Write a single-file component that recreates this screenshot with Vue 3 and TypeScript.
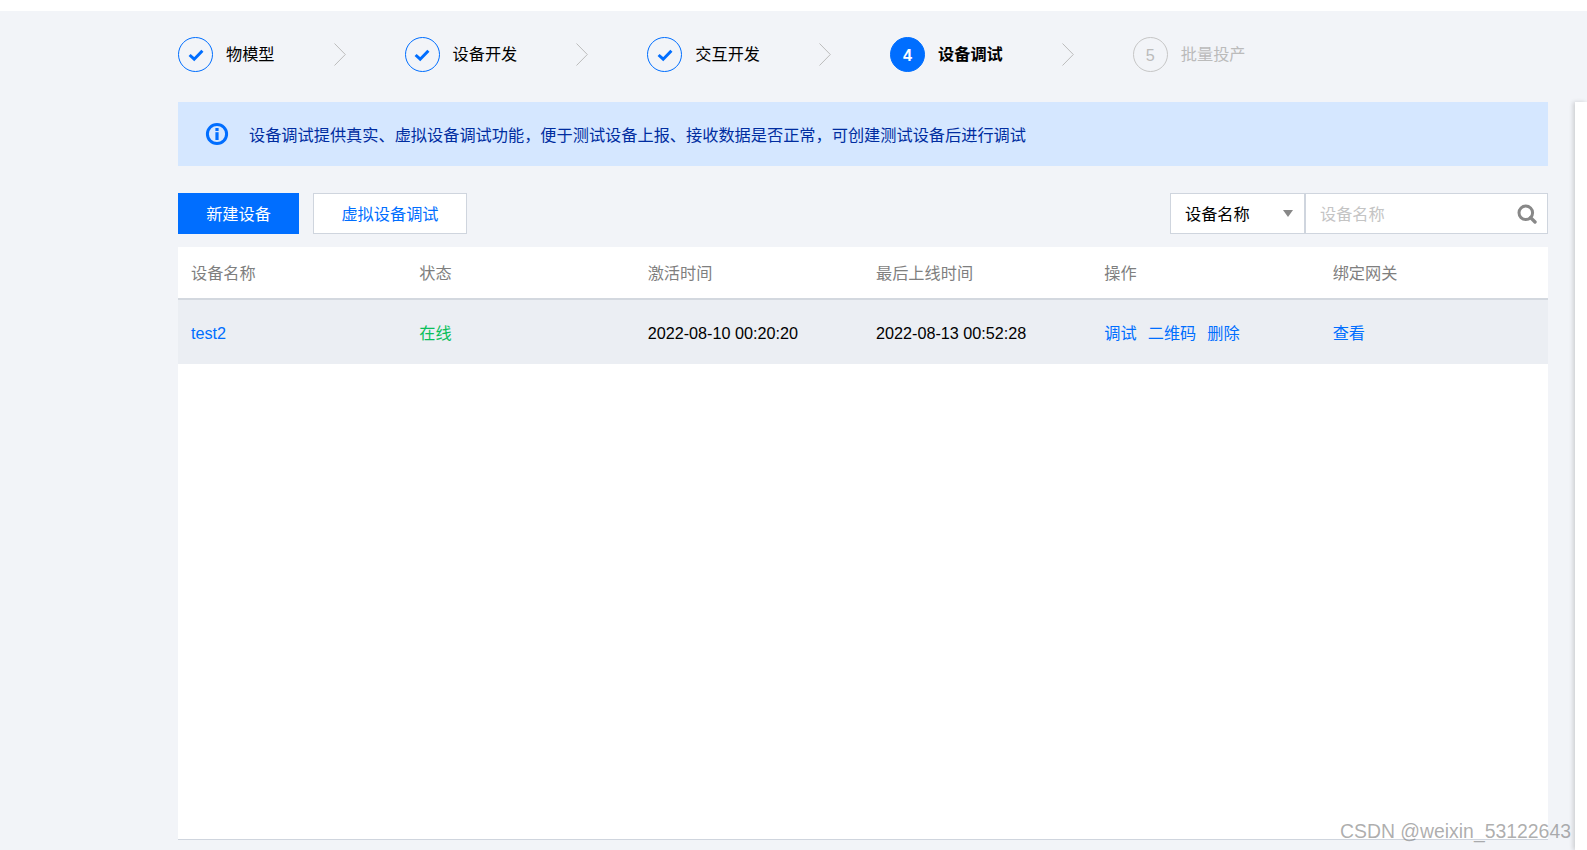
<script setup lang="ts">
interface Step { label: string; state: 'done' | 'active' | 'todo'; num: number }
const steps: Step[] = [
  { label: '物模型', state: 'done', num: 1 },
  { label: '设备开发', state: 'done', num: 2 },
  { label: '交互开发', state: 'done', num: 3 },
  { label: '设备调试', state: 'active', num: 4 },
  { label: '批量投产', state: 'todo', num: 5 },
]
const headers = ['设备名称', '状态', '激活时间', '最后上线时间', '操作', '绑定网关']
</script>

<template>
  <div class="page">
    <div class="topbar"></div>
    <main class="main">
      <nav class="steps">
        <template v-for="(s, i) in steps" :key="s.label">
          <div class="step" :class="s.state">
            <span class="circle">
              <svg v-if="s.state === 'done'" width="16" height="14" viewBox="0 0 16 14">
                <path d="M1.6 7 L6.2 11.2 L14.4 2.8" fill="none" stroke="#006eff" stroke-width="3" />
              </svg>
              <template v-else>{{ s.num }}</template>
            </span>
            <span class="step-label">{{ s.label }}</span>
          </div>
          <svg v-if="i < steps.length - 1" class="chevron" width="12" height="23" viewBox="0 0 12 23">
            <path d="M0.5 0.5 L11.3 11.5 L0.5 22.5" fill="none" stroke="#bcbcbc" stroke-width="1" />
          </svg>
        </template>
      </nav>

      <div class="banner">
        <svg class="info" width="24" height="24" viewBox="0 0 24 24">
          <circle cx="12" cy="12" r="9.6" fill="none" stroke="#006eff" stroke-width="3" />
          <rect x="10.4" y="6" width="3.2" height="3" fill="#006eff" />
          <rect x="10.4" y="10.2" width="3.2" height="7.8" fill="#006eff" />
        </svg>
        <span class="banner-text">设备调试提供真实、虚拟设备调试功能，便于测试设备上报、接收数据是否正常，可创建测试设备后进行调试</span>
      </div>

      <div class="toolbar">
        <button class="btn primary" type="button">新建设备</button>
        <button class="btn ghost" type="button">虚拟设备调试</button>
        <div class="search">
          <div class="select">
            <span>设备名称</span>
            <i class="caret"></i>
          </div>
          <div class="input">
            <span class="placeholder">设备名称</span>
            <svg width="20" height="20" viewBox="0 0 20 20">
              <circle cx="8.8" cy="8.8" r="6.8" fill="none" stroke="#888" stroke-width="3" />
              <path d="M13.6 13.6 L18 18" stroke="#888" stroke-width="3.4" stroke-linecap="round" />
            </svg>
          </div>
        </div>
      </div>

      <section class="table">
        <div class="row head">
          <div v-for="h in headers" :key="h" class="cell">{{ h }}</div>
        </div>
        <div class="row body">
          <div class="cell"><a class="link">test2</a></div>
          <div class="cell online">在线</div>
          <div class="cell">2022-08-10 00:20:20</div>
          <div class="cell">2022-08-13 00:52:28</div>
          <div class="cell ops">
            <a class="link">调试</a>
            <a class="link">二维码</a>
            <a class="link">删除</a>
          </div>
          <div class="cell"><a class="link">查看</a></div>
        </div>
      </section>
    </main>
    <aside class="drawer"></aside>
    <div class="watermark">CSDN @weixin_53122643</div>
  </div>
</template>

<style>
html, body { margin: 0; padding: 0; }
</style>

<style scoped>
.page {
  position: relative;
  width: 1587px;
  height: 850px;
  overflow: hidden;
  display: flex;
  flex-direction: column;
  background: #f2f4f8;
  font-family: "Liberation Sans", "Noto Sans CJK SC", sans-serif;
  font-size: 16.2px;
  line-height: 22px;
  color: #000;
}
.topbar { height: 11px; background: #fff; flex: none; }
.main {
  flex: 1;
  min-height: 0;
  display: flex;
  flex-direction: column;
  padding: 26px 39px 10px 178px;
}
.steps { display: flex; align-items: center; gap: 59px; height: 35px; flex: none; }
.step { display: flex; align-items: center; gap: 13px; }
.step-label { margin-bottom: 2px; }
.circle {
  width: 35px;
  height: 35px;
  box-sizing: border-box;
  border-radius: 50%;
  border: 1px solid #006eff;
  display: flex;
  align-items: center;
  justify-content: center;
}
.step.active .circle { background: #006eff; color: #fff; font-weight: 700; }
.step.active .step-label { font-weight: 700; }
.step.todo .circle { border-color: #c6c6c6; color: #bbb; }
.step.todo .step-label { color: #bbb; }
.chevron { flex: none; }

.banner {
  margin-top: 30px;
  height: 64px;
  flex: none;
  background: #d5e7ff;
  display: flex;
  align-items: center;
  padding-left: 27px;
  gap: 20px;
  color: #002da0;
}
.banner-text { margin-top: 2px; }
.info { flex: none; }

.toolbar { margin-top: 27px; display: flex; align-items: stretch; height: 41px; flex: none; }
.btn {
  font: inherit;
  box-sizing: border-box;
  padding: 0;
  cursor: pointer;
  border-radius: 0;
}
.primary { width: 121px; background: #006eff; color: #fff; border: none; }
.ghost { width: 154px; margin-left: 14px; background: #fff; color: #006eff; border: 1px solid #cfd5de; }
.search { margin-left: auto; display: flex; }
.select, .input {
  box-sizing: border-box;
  background: #fff;
  border: 1px solid #cfd5de;
  display: flex;
  align-items: center;
}
.select {
  width: 135px;
  padding: 0 11px 0 14px;
  justify-content: space-between;
}
.caret {
  width: 0;
  height: 0;
  border-left: 5.5px solid transparent;
  border-right: 5.5px solid transparent;
  border-top: 7px solid #888;
}
.input {
  width: 243px;
  padding: 0 10px 0 14px;
  justify-content: space-between;
}
.placeholder { color: #c4c4c4; }

.table {
  margin-top: 13px;
  flex: 1;
  background: #fff;
  border-bottom: 1px solid #cfd5de;
}
.row { display: grid; grid-template-columns: repeat(6, 1fr); align-items: center; }
.head { height: 53px; box-sizing: border-box; border-bottom: 2px solid #d3d8df; color: #7f7f7f; }
.body { height: 64px; box-sizing: border-box; padding-top: 2px; background: #ebeef3; }
.cell { padding-left: 13px; }
.link { color: #006eff; cursor: pointer; }
.online { color: #0abf5b; }
.ops { display: flex; gap: 11px; }

.drawer {
  position: absolute;
  top: 102px;
  right: 0;
  bottom: 0;
  width: 12px;
  background: #fff;
  box-shadow: -2px 0 4px rgba(0, 0, 0, 0.15);
}
.watermark {
  position: absolute;
  left: 1340px;
  top: 820px;
  font-size: 19.4px;
  line-height: 22px;
  color: rgba(120, 120, 120, 0.6);
  white-space: nowrap;
}
</style>
